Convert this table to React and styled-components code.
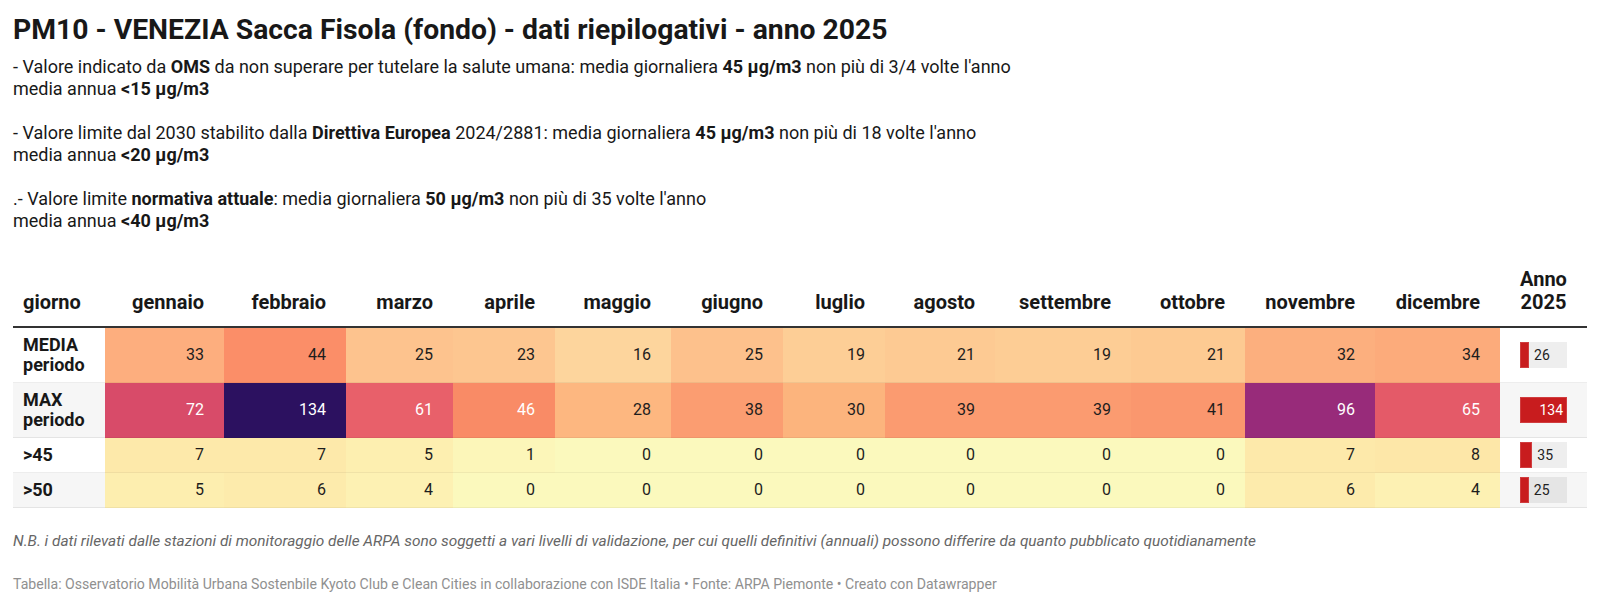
import React from 'react';
import styled, { createGlobalStyle } from 'styled-components';

const GlobalStyle = createGlobalStyle`
  body {
    margin: 0;
    background: #fff;
    font-family: Roboto, "Liberation Sans", sans-serif;
    color: #181818;
  }
`;

const Wrapper = styled.div`
  padding: 14px 13px 0;
`;

const Title = styled.h1`
  margin: 0;
  font-size: 28.3px;
  line-height: 32px;
  font-weight: 700;
  color: #181818;
`;

const Intro = styled.div`
  margin-top: 10px;
  font-size: 18px;
  line-height: 22px;
  color: #181818;
`;

const Para = styled.p`
  margin: 0 0 22px;

  &:last-child {
    margin-bottom: 0;
  }
`;

const Table = styled.table`
  margin-top: 28px;
  width: 1574px;
  border-collapse: collapse;
  table-layout: fixed;
`;

const HeadCell = styled.th`
  padding: 8px 20px 12px 10px;
  font-size: 20px;
  line-height: 23px;
  font-weight: 700;
  text-align: ${({ $align }) => $align || 'right'};
  vertical-align: bottom;
  border-bottom: 2px solid #333;
  white-space: nowrap;
`;

const Row = styled.tr`
  background: ${({ $striped }) => ($striped ? '#f6f6f6' : '#fff')};
`;

const LabelCell = styled.td`
  padding: 7px 10px;
  font-size: 18px;
  line-height: 20px;
  font-weight: 700;
  vertical-align: top;
  border-bottom: 1px solid rgba(0, 0, 0, 0.07);
`;

const ValueCell = styled.td`
  padding: 7px 20px 7px 10px;
  font-size: 16px;
  line-height: 20px;
  text-align: right;
  vertical-align: middle;
  background: ${({ $bg }) => $bg};
  color: ${({ $light }) => ($light ? '#fff' : '#1d1d1d')};
  border-bottom: 1px solid rgba(0, 0, 0, 0.05);
`;

const BarCell = styled.td`
  padding: 0;
  vertical-align: middle;
  border-bottom: 1px solid rgba(0, 0, 0, 0.07);
`;

const BarTrack = styled.div`
  position: relative;
  display: flex;
  align-items: center;
  width: 47px;
  height: 26px;
  margin: 0 auto;
  background: rgba(0, 0, 0, 0.065);
`;

const BarFill = styled.div`
  align-self: stretch;
  background: #c81c1e;
  box-shadow: inset 0 0 0 1px rgba(255, 255, 255, 0.15);
`;

const BarLabel = styled.span`
  margin-left: 5px;
  font-size: 14px;
  line-height: 16px;
  color: #222;
`;

const BarLabelInside = styled.span`
  position: absolute;
  right: 4px;
  font-size: 14px;
  line-height: 16px;
  color: #fff;
`;

const Note = styled.p`
  margin: 23px 0 0;
  font-size: 15.4px;
  line-height: 20px;
  font-style: italic;
  color: #666;
`;

const Credits = styled.p`
  margin: 24px 0 0;
  font-size: 14.1px;
  line-height: 18px;
  color: #909090;
`;

const widths = [92, 119, 122, 107, 102, 116, 112, 102, 110, 136, 114, 130, 125, 87];

const months = [
  'gennaio', 'febbraio', 'marzo', 'aprile', 'maggio', 'giugno',
  'luglio', 'agosto', 'settembre', 'ottobre', 'novembre', 'dicembre',
];

const MAX_TOTAL = 134;

const rows = [
  {
    label: ['MEDIA', 'periodo'],
    total: 26,
    cells: [
      [33, '#fdae7e'], [44, '#fb8e68'], [25, '#fdc38e'], [23, '#fdc690'],
      [16, '#fdd59d'], [25, '#fdc18c'], [19, '#fdce96'], [21, '#fdca93'],
      [19, '#fdcd95'], [21, '#fdca92'], [32, '#fcaf7e'], [34, '#fcab7b'],
    ],
  },
  {
    label: ['MAX', 'periodo'],
    total: 134,
    striped: true,
    cells: [
      [72, '#d84b69', true], [134, '#2c1160', true], [61, '#e8606a', true], [46, '#f98b66', true],
      [28, '#fdb780'], [38, '#fb9d71'], [30, '#fcb47d'], [39, '#fb9b70'],
      [39, '#fb9b70'], [41, '#fa976e'], [96, '#982b7a', true], [65, '#e45a68', true],
    ],
  },
  {
    label: ['>45'],
    total: 35,
    cells: [
      [7, '#fde9aa'], [7, '#fde9aa'], [5, '#fdefb0'], [1, '#fcf6b9'],
      [0, '#fbf9bd'], [0, '#fbf9bd'], [0, '#fbf9bd'], [0, '#fbf9bd'],
      [0, '#fbf9bd'], [0, '#fbf9bd'], [7, '#fde9aa'], [8, '#fde7a8'],
    ],
  },
  {
    label: ['>50'],
    total: 25,
    striped: true,
    cells: [
      [5, '#fdeeaf'], [6, '#fdebac'], [4, '#fdf1b3'], [0, '#fbf9bd'],
      [0, '#fbf9bd'], [0, '#fbf9bd'], [0, '#fbf9bd'], [0, '#fbf9bd'],
      [0, '#fbf9bd'], [0, '#fbf9bd'], [6, '#fdebac'], [4, '#fdf1b3'],
    ],
  },
];

const TotalBar = ({ value }) => {
  const full = value >= MAX_TOTAL;
  return (
    <BarTrack>
      <BarFill style={{ width: `${(value / MAX_TOTAL) * 100}%` }} />
      {full ? <BarLabelInside>{value}</BarLabelInside> : <BarLabel>{value}</BarLabel>}
    </BarTrack>
  );
};

const App = () => (
  <Wrapper>
    <GlobalStyle />
    <Title>PM10 - VENEZIA Sacca Fisola (fondo) - dati riepilogativi - anno 2025</Title>

    <Intro>
      <Para>
        - Valore indicato da <b>OMS</b> da non superare per tutelare la salute umana: media giornaliera <b>45 µg/m3</b> non più di 3/4 volte l'anno
        <br />
        media annua <b>&lt;15 µg/m3</b>
      </Para>
      <Para>
        - Valore limite dal 2030 stabilito dalla <b>Direttiva Europea</b> 2024/2881: media giornaliera <b>45 µg/m3</b> non più di 18 volte l'anno
        <br />
        media annua <b>&lt;20 µg/m3</b>
      </Para>
      <Para>
        .- Valore limite <b>normativa attuale</b>: media giornaliera <b>50 µg/m3</b> non più di 35 volte l'anno
        <br />
        media annua <b>&lt;40 µg/m3</b>
      </Para>
    </Intro>

    <Table>
      <colgroup>
        {widths.map((w, i) => (
          <col key={i} style={{ width: w }} />
        ))}
      </colgroup>
      <thead>
        <tr>
          <HeadCell $align="left">giorno</HeadCell>
          {months.map((m) => (
            <HeadCell key={m}>{m}</HeadCell>
          ))}
          <HeadCell $align="center" style={{ paddingRight: 10 }}>
            Anno
            <br />
            2025
          </HeadCell>
        </tr>
      </thead>
      <tbody>
        {rows.map((row) => (
          <Row key={row.label.join(' ')} $striped={row.striped}>
            <LabelCell>
              {row.label.map((l, i) => (
                <React.Fragment key={l}>
                  {i > 0 && <br />}
                  {l}
                </React.Fragment>
              ))}
            </LabelCell>
            {row.cells.map(([value, bg, light], i) => (
              <ValueCell key={i} $bg={bg} $light={light}>
                {value}
              </ValueCell>
            ))}
            <BarCell>
              <TotalBar value={row.total} />
            </BarCell>
          </Row>
        ))}
      </tbody>
    </Table>

    <Note>
      N.B. i dati rilevati dalle stazioni di monitoraggio delle ARPA sono soggetti a vari livelli di validazione, per cui quelli definitivi (annuali) possono differire da quanto pubblicato quotidianamente
    </Note>
    <Credits>
      Tabella: Osservatorio Mobilità Urbana Sostenbile Kyoto Club e Clean Cities in collaborazione con ISDE Italia • Fonte: ARPA Piemonte • Creato con Datawrapper
    </Credits>
  </Wrapper>
);

export default App;
